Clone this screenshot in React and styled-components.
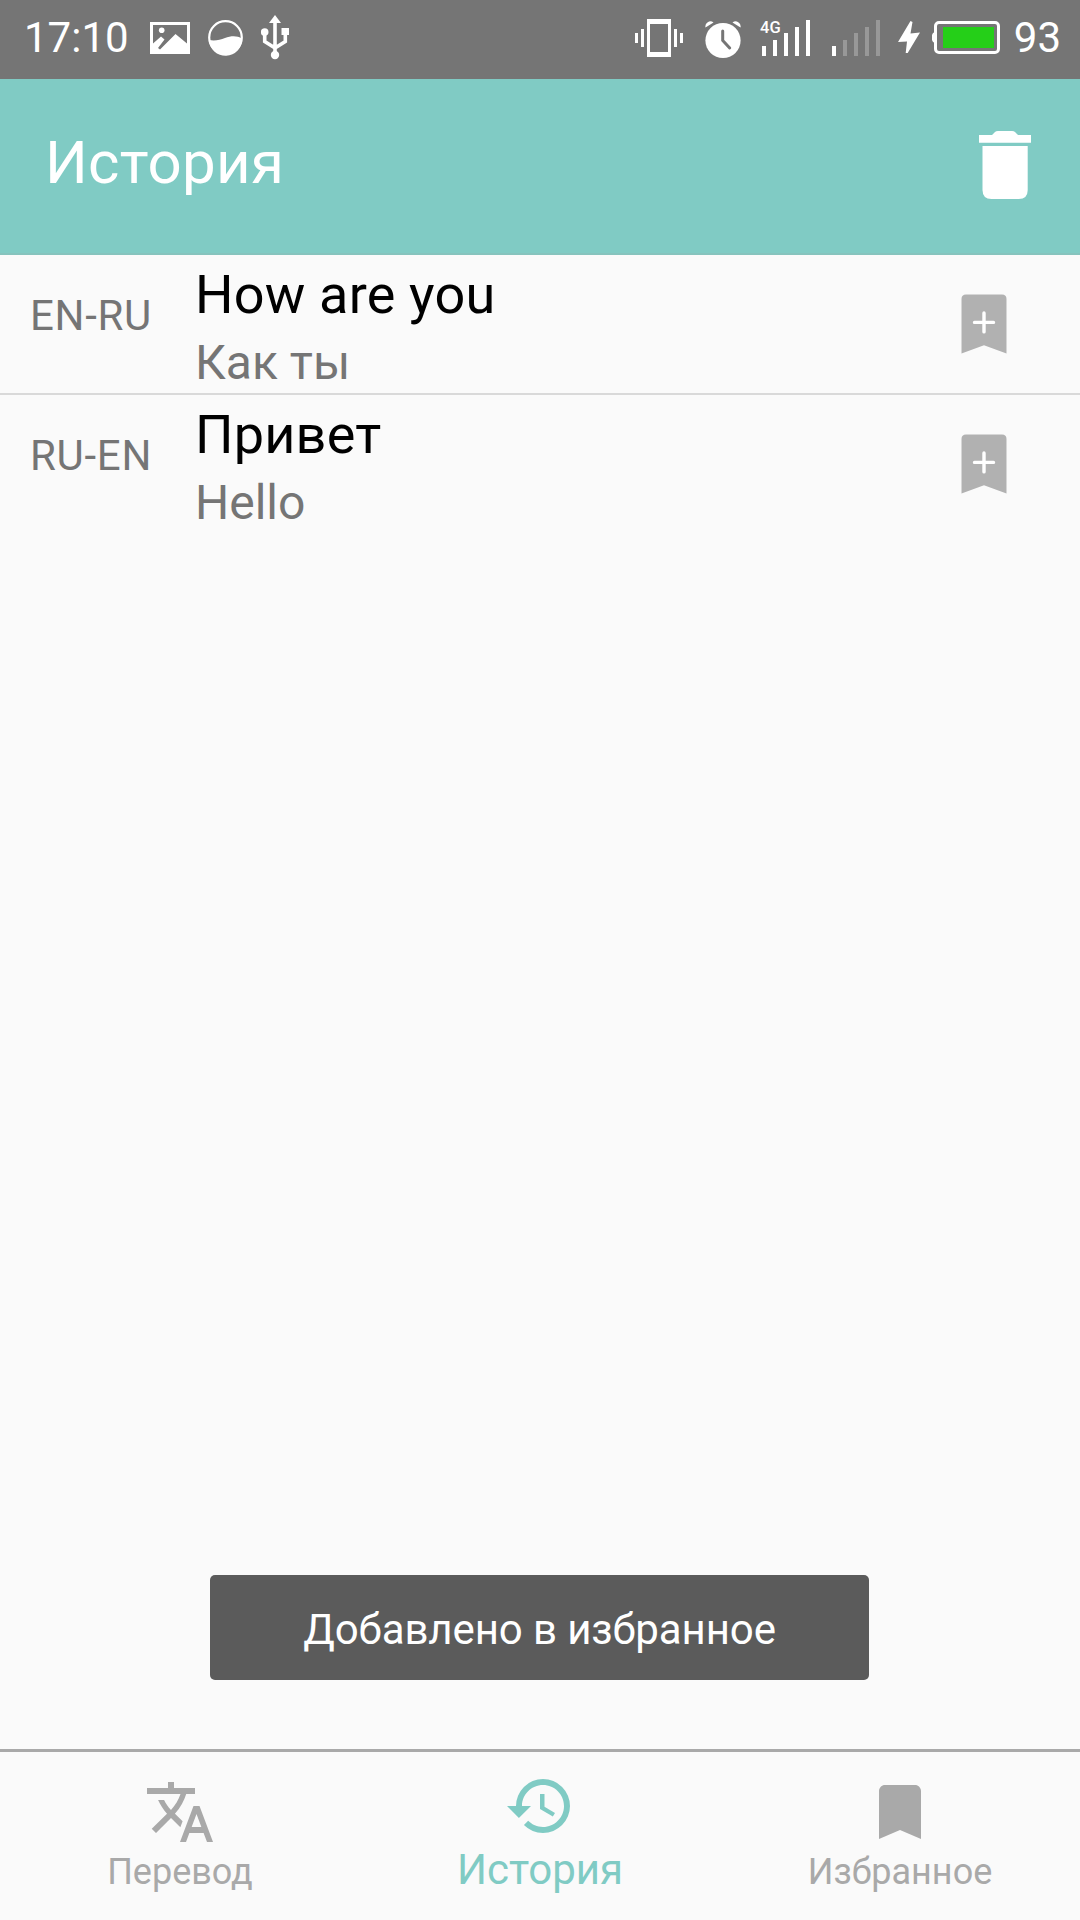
import React from 'react';
import styled, { createGlobalStyle } from 'styled-components';
import { MdTranslate, MdHistory, MdBookmark } from 'react-icons/md';

const GlobalStyle = createGlobalStyle`
    body {
        margin: 0;
        background-color: #FAFAFA;
        font-family: Roboto, "Noto Sans", sans-serif;
    }
`;

const Screen = styled.div`
    position: relative;
    display: flex;
    flex-direction: column;
    width: 1080px;
    height: 1920px;
    overflow: hidden;
    background-color: #FAFAFA;
`;

const StatusBar = styled.div`
    display: flex;
    flex: none;
    justify-content: space-between;
    height: 79px;
    box-sizing: border-box;
    padding: 0 19px 0 24px;
    color: #FFFFFF;
    background-color: #757575;

    & svg {
        flex: none;
        display: block;
        fill: currentColor;
    }
`;

const StatusGroup = styled.div`
    display: flex;
    align-items: flex-start;
    gap: ${props => props.$gap};
`;

const ChargeGroup = styled(StatusGroup)`
    margin-left: -3px;
`;

const StatusText = styled.span`
    width: ${props => props.$width};
    font-size: 42px;
    line-height: 75px;
    text-align: ${props => props.$align || 'left'};
    white-space: nowrap;
`;

const Header = styled.header`
    display: flex;
    flex: none;
    align-items: center;
    justify-content: space-between;
    height: 176px;
    box-sizing: border-box;
    padding: 0 49px 2px 45px;
    color: #FFFFFF;
    background-color: #80CBC4;
    border-bottom: 2px solid #86C3BD;
`;

const Title = styled.h1`
    margin: 0;
    padding-bottom: 4px;
    font-size: 60px;
    font-weight: 400;
    line-height: 70px;
    letter-spacing: 0.25px;
`;

const List = styled.main`
    flex: 1;
`;

const Item = styled.div`
    display: flex;
    height: 138px;
    padding: 0 73px 0 30px;

    & + & {
        border-top: 2px solid #D9D9D9;
    }

    & svg {
        margin-top: 39px;
    }
`;

const Direction = styled.div`
    width: 165px;
    padding-top: 36px;
    color: #757575;
    font-size: 42px;
    line-height: 50px;
    letter-spacing: 0.7px;
`;

const Words = styled.div`
    flex: 1;
`;

const Source = styled.div`
    padding-top: 8px;
    color: #000000;
    font-size: 54px;
    line-height: 64px;
    letter-spacing: 0.2px;
`;

const Translation = styled.div`
    color: #757575;
    font-size: 48px;
    line-height: 71px;
`;

const Toast = styled.div`
    position: absolute;
    top: 1575px;
    left: 210px;
    width: 659px;
    height: 105px;
    border-radius: 5px;
    color: #FFFFFF;
    background-color: #5B5B5B;
    font-size: 42px;
    line-height: 109px;
    letter-spacing: -0.1px;
    text-align: center;
`;

const NavBar = styled.nav`
    display: grid;
    flex: none;
    grid-template-columns: repeat(3, 1fr);
    height: 168px;
    border-top: 3px solid #A9A9A9;
`;

const Tab = styled.div`
    display: flex;
    flex-direction: column;
    align-items: center;
    padding-top: ${props => (props.$active ? '18px' : '24px')};
    color: ${props => (props.$active ? '#80CBC4' : '#A9A9A9')};
    font-size: ${props => (props.$active ? '42px' : '36px')};

    & svg {
        display: block;
        width: 72px;
        height: 72px;
    }

    & span {
        line-height: ${props => (props.$active ? '56px' : '48px')};
    }
`;

const PictureIcon = () => (
    <svg width="40" height="79" viewBox="0 0 40 79">
        <path fillRule="evenodd" d="M0 22h40v32H0zM3 25v18.500l8-7 3.500 3-6.500 8.500 2 1.500L25.500 34 37 43.500V25z" />
        <circle cx="11.7" cy="30.3" r="2.8" />
    </svg>
);

const WaveIcon = () => (
    <svg width="35" height="79" viewBox="0 0 35 79">
        <circle cx="17.5" cy="37.5" r="16.3" fill="none" stroke="currentColor" strokeWidth="2.2" />
        <path d="M1 40c6 1 11 0 16-2 6-2.200 12-2.600 17 .6A16.500 16.500 0 0 1 1 40z" />
    </svg>
);

const UsbIcon = () => (
    <svg width="28" height="79" viewBox="0 0 28 79">
        <path d="M14 15l6 8H8z" />
        <path d="M14 20v34M3.700 34v7.500L14 48M24.300 33v8.500L14 48" fill="none" stroke="currentColor" strokeWidth="3.6" />
        <circle cx="3.700" cy="32" r="3.8" />
        <path d="M20.500 28h7.500v7h-7.500z" />
        <circle cx="14" cy="55" r="4.2" />
    </svg>
);

const VibrateIcon = () => (
    <svg width="50" height="79" viewBox="0 0 50 79">
        <path fillRule="evenodd" d="M12 19h24v38H12zM15 24v28h18V24z" />
        <path d="M0 33h3v10H0zM6 29h3v18H6zM39 29h3v18h-3zM45 33h3v10h-3z" />
    </svg>
);

const AlarmIcon = () => (
    <svg width="36" height="79" viewBox="0 0 36 79">
        <path d="M0.500 27.500A5 5 0 0 1 8.500 22.500zM35.500 27.500A5 5 0 0 0 27.500 22.500z" />
        <circle cx="18" cy="40.500" r="17.6" />
        <path d="M17.700 31v9.500l7 7.500" fill="none" stroke="#757575" strokeWidth="3" strokeLinecap="round" />
    </svg>
);

const SIGNAL_TOPS = [46, 40, 33, 27, 20];

const SignalIcon = ({ level, network }) => (
    <svg width="50" height="79" viewBox="0 0 50 79" overflow="visible">
        {SIGNAL_TOPS.map((top, i) => (
            <rect key={top} x={1 + i * 11} y={top} width="4" height={56 - top} fill={i < level ? '#FFFFFF' : '#989898'} />
        ))}
        {network && <text x="-1" y="33" fontSize="16.5" fontWeight="500">{network}</text>}
    </svg>
);

const BoltIcon = () => (
    <svg width="22" height="79" viewBox="0 0 22 79">
        <path d="M12.500 21L0 42l9-.5L7.700 53l2 0L22 32.500l-9.500 1L14.500 22z" />
    </svg>
);

const BatteryIcon = () => (
    <svg width="68" height="79" viewBox="0 0 68 79">
        <path d="M3 32v11a4 4 0 0 1-3-3v-5a4 4 0 0 1 3-3z" />
        <rect x="3.500" y="22.500" width="63" height="30" rx="3.500" fill="none" stroke="currentColor" strokeWidth="3" />
        <path d="M11 27h51v21H11z" fill="#25CF18" />
    </svg>
);

const TrashIcon = () => (
    <svg width="52" height="68" viewBox="0 0 52 68" fill="currentColor">
        <path d="M0 4h13l3-3q1-1 3-1h14q2 0 3 1l3 3h13v7.700H0z" />
        <path d="M3.500 15h45.200v44q0 9-9 9H12.500q-9 0-9-9z" />
    </svg>
);

const AddBookmarkIcon = () => (
    <svg width="46" height="60" viewBox="0 0 46 60">
        <path d="M0.500 4.900q0-4.500 4.500-4.500h36q4.500 0 4.500 4.500v54.600l-22.500-8.200-22.500 8.200z" fill="#B1B1B1" />
        <path d="M13.500 28.400h19M23 18.900v19" stroke="#FFFFFF" strokeWidth="3.400" strokeLinecap="round" />
    </svg>
);

const history = [
    { direction: 'EN-RU', source: 'How are you', translation: 'Как ты' },
    { direction: 'RU-EN', source: 'Привет', translation: 'Hello' },
];

const App = () => {
    return (
        <Screen>
            <GlobalStyle />

            {/* STATUS BAR */}
            <StatusBar>
                <StatusGroup $gap="18px">
                    <StatusText $width="108px">17:10</StatusText>
                    <PictureIcon />
                    <WaveIcon />
                    <UsbIcon />
                </StatusGroup>
                <StatusGroup $gap="20px">
                    <VibrateIcon />
                    <AlarmIcon />
                    <SignalIcon level={5} network="4G" />
                    <SignalIcon level={1} />
                    <ChargeGroup $gap="12px">
                        <BoltIcon />
                        <BatteryIcon />
                        <StatusText $width="49px" $align="right">93</StatusText>
                    </ChargeGroup>
                </StatusGroup>
            </StatusBar>

            <Header>
                <Title>История</Title>
                <TrashIcon />
            </Header>

            <List>
                {history.map(item => (
                    <Item key={item.direction}>
                        <Direction>{item.direction}</Direction>
                        <Words>
                            <Source>{item.source}</Source>
                            <Translation>{item.translation}</Translation>
                        </Words>
                        <AddBookmarkIcon />
                    </Item>
                ))}
            </List>

            <Toast>Добавлено в избранное</Toast>

            {/* BOTTOM TABS */}
            <NavBar>
                <Tab>
                    <MdTranslate />
                    <span>Перевод</span>
                </Tab>
                <Tab $active>
                    <MdHistory />
                    <span>История</span>
                </Tab>
                <Tab>
                    <MdBookmark />
                    <span>Избранное</span>
                </Tab>
            </NavBar>
        </Screen>
    );
};

export default App;
